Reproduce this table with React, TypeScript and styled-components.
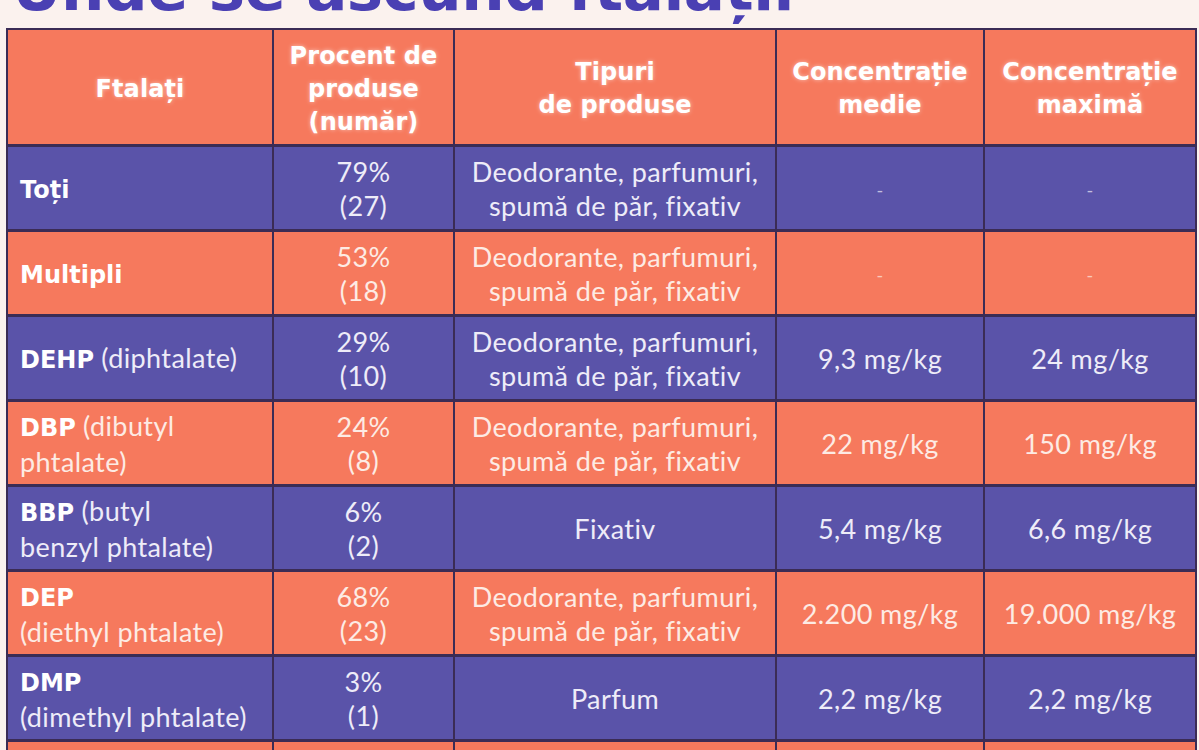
import React from "react";
import styled, { createGlobalStyle } from "styled-components";

const GlobalStyle = createGlobalStyle`
  html, body {
    margin: 0;
    padding: 0;
    background: #fbf2ee;
    font-family: Lato, "Noto Sans", "Liberation Sans", sans-serif;
  }
`;

const CORAL = "#f6795d";
const PURPLE = "#5a53a9";
const LINE = "#3b2c55";
const HEAVY = `"DejaVu Sans", "Liberation Sans", sans-serif`;

const Page = styled.div`
  padding-left: 6px;
  width: 1189px;
`;

const Title = styled.h1`
  margin: -41px 0 9px 6px;
  font-family: ${HEAVY};
  font-size: 61px;
  line-height: 60px;
  font-weight: 700;
  color: #4a40b3;
  white-space: nowrap;
  letter-spacing: -0.5px;
`;

const Table = styled.table`
  border-collapse: collapse;
  table-layout: fixed;
  width: 1189px;
  border: 2px solid ${LINE};
`;

const Row = styled.tr<{ $tone: "coral" | "purple" }>`
  background: ${(p) => (p.$tone === "coral" ? CORAL : PURPLE)};
  color: ${(p) => (p.$tone === "coral" ? "#fdebe4" : "#eeecf8")};
  height: 85px;
`;

const HeadRow = styled.tr`
  background: ${CORAL};
  height: 116px;
`;

const HeadCell = styled.th`
  border: 2px solid ${LINE};
  border-bottom-width: 3px;
  padding: 5px 2px 0;
  color: #ffffff;
  font-family: ${HEAVY};
  font-weight: 700;
  font-size: 24px;
  line-height: 33px;
  letter-spacing: 0.1px;
  text-align: center;
  vertical-align: middle;
  text-shadow: 0 0 4px rgba(255, 255, 255, 0.55);
`;

const Cell = styled.td<{ $align?: "left" | "center" }>`
  border-left: 2px solid ${LINE};
  border-right: 2px solid ${LINE};
  border-top: 3px solid ${LINE};
  border-bottom: 3px solid ${LINE};
  padding: ${(p) => (p.$align === "left" ? "2px 4px 0 12px" : "2px 2px 0")};
  font-size: 27px;
  line-height: 34px;
  letter-spacing: 0.4px;
  text-align: ${(p) => p.$align ?? "center"};
  vertical-align: middle;
`;

const Abbr = styled.span`
  font-family: ${HEAVY};
  font-weight: 700;
  font-size: 24px;
  letter-spacing: 0;
  color: #ffffff;
`;

const Dash = styled.span`
  font-size: 18px;
  opacity: 0.7;
`;

type Data = {
  tone: "coral" | "purple";
  name: React.ReactNode;
  pct: string;
  count: string;
  types: React.ReactNode;
  avg: string;
  max: string;
};

const MIX = (
  <>
    Deodorante, parfumuri,
    <br />
    spumă de păr, fixativ
  </>
);

const rows: Data[] = [
  { tone: "purple", name: <Abbr>Toți</Abbr>, pct: "79%", count: "(27)", types: MIX, avg: "-", max: "-" },
  { tone: "coral", name: <Abbr>Multipli</Abbr>, pct: "53%", count: "(18)", types: MIX, avg: "-", max: "-" },
  {
    tone: "purple",
    name: (
      <>
        <Abbr>DEHP</Abbr> (diphtalate)
      </>
    ),
    pct: "29%",
    count: "(10)",
    types: MIX,
    avg: "9,3 mg/kg",
    max: "24 mg/kg",
  },
  {
    tone: "coral",
    name: (
      <>
        <Abbr>DBP</Abbr> (dibutyl
        <br />
        phtalate)
      </>
    ),
    pct: "24%",
    count: "(8)",
    types: MIX,
    avg: "22 mg/kg",
    max: "150 mg/kg",
  },
  {
    tone: "purple",
    name: (
      <>
        <Abbr>BBP</Abbr> (butyl
        <br />
        benzyl phtalate)
      </>
    ),
    pct: "6%",
    count: "(2)",
    types: "Fixativ",
    avg: "5,4 mg/kg",
    max: "6,6 mg/kg",
  },
  {
    tone: "coral",
    name: (
      <>
        <Abbr>DEP</Abbr>
        <br />
        (diethyl phtalate)
      </>
    ),
    pct: "68%",
    count: "(23)",
    types: MIX,
    avg: "2.200 mg/kg",
    max: "19.000 mg/kg",
  },
  {
    tone: "purple",
    name: (
      <>
        <Abbr>DMP</Abbr>
        <br />
        (dimethyl phtalate)
      </>
    ),
    pct: "3%",
    count: "(1)",
    types: "Parfum",
    avg: "2,2 mg/kg",
    max: "2,2 mg/kg",
  },
];

const value = (v: string) => (v === "-" ? <Dash>-</Dash> : v);

export default function App() {
  return (
    <Page>
      <GlobalStyle />
      <Title>Unde se ascund ftalații</Title>
      <Table>
        <colgroup>
          <col style={{ width: 266 }} />
          <col style={{ width: 181 }} />
          <col style={{ width: 322 }} />
          <col style={{ width: 208 }} />
          <col style={{ width: 212 }} />
        </colgroup>
        <thead>
          <HeadRow>
            <HeadCell>Ftalați</HeadCell>
            <HeadCell>
              Procent de
              <br />
              produse
              <br />
              (număr)
            </HeadCell>
            <HeadCell>
              Tipuri
              <br />
              de produse
            </HeadCell>
            <HeadCell>
              Concentrație
              <br />
              medie
            </HeadCell>
            <HeadCell>
              Concentrație
              <br />
              maximă
            </HeadCell>
          </HeadRow>
        </thead>
        <tbody>
          {rows.map((r, i) => (
            <Row key={i} $tone={r.tone}>
              <Cell $align="left">{r.name}</Cell>
              <Cell>
                {r.pct}
                <br />
                {r.count}
              </Cell>
              <Cell>{r.types}</Cell>
              <Cell>{value(r.avg)}</Cell>
              <Cell>{value(r.max)}</Cell>
            </Row>
          ))}
          <Row $tone="coral">
            <Cell $align="left" />
            <Cell />
            <Cell />
            <Cell />
            <Cell />
          </Row>
        </tbody>
      </Table>
    </Page>
  );
}
